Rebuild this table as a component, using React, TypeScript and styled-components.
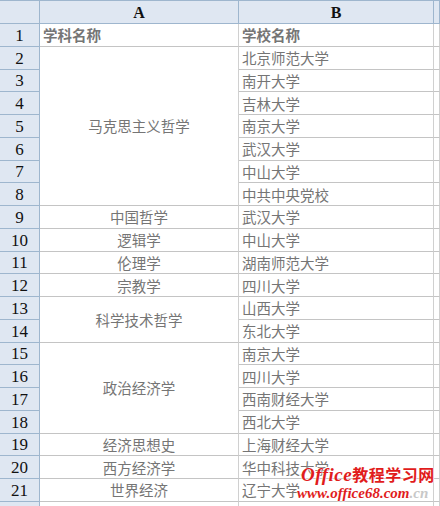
import React from "react";
import styled, { createGlobalStyle } from "styled-components";

const Global = createGlobalStyle`
  html, body { margin: 0; padding: 0; background: #ffffff; }
  body { overflow: hidden; }
`;

const ROW_H = 22.75;

const Wrap = styled.div`
  position: relative;
  width: 440px;
  height: 506px;
  overflow: hidden;
`;

const Sheet = styled.div`
  display: grid;
  grid-template-columns: 40px 199px 195px 1fr;
  grid-template-rows: 23px repeat(22, ${ROW_H}px);
  border-top: 1px solid #9eb6ce;
  box-sizing: border-box;
`;

const HeaderBase = styled.div`
  background: #dfe7f2;
  border-right: 1px solid #9eb6ce;
  border-bottom: 1px solid #9eb6ce;
  display: flex;
  align-items: center;
  justify-content: center;
  font-family: "Liberation Serif", "DejaVu Serif", serif;
  color: #111;
  box-sizing: border-box;
`;

const Corner = styled(HeaderBase)`
  grid-row: 1;
  grid-column: 1;
`;

const ColHeader = styled(HeaderBase)<{ $col: number }>`
  grid-row: 1;
  grid-column: ${(p) => p.$col};
  font-size: 16px;
  font-weight: bold;
  padding-top: 1px;
`;

const RowHeader = styled(HeaderBase)<{ $row: number }>`
  grid-row: ${(p) => p.$row};
  grid-column: 1;
  font-size: 17px;
  padding-top: 2px;
`;

const Cell = styled.div<{ $row: number; $col: number; $span?: number; $center?: boolean; $bold?: boolean }>`
  grid-row: ${(p) => p.$row} / span ${(p) => p.$span ?? 1};
  grid-column: ${(p) => p.$col};
  border-right: 1px solid #d0d0d0;
  border-bottom: 1px solid #c4c4c4;
  display: flex;
  align-items: center;
  justify-content: ${(p) => (p.$center ? "center" : "flex-start")};
  padding-left: ${(p) => (p.$center ? "0" : "3px")};
  font-family: "Noto Sans CJK SC", "Noto Sans", sans-serif;
  font-size: 14.5px;
  font-weight: ${(p) => (p.$bold ? "bold" : "normal")};
  color: #757575;
  white-space: nowrap;
  box-sizing: border-box;
  overflow: hidden;
`;

const Watermark = styled.div`
  position: absolute;
  left: 301px;
  top: 465px;
  display: flex;
  flex-direction: column;
  line-height: 1;
  text-shadow: 0 0 2px #fff, 0 0 2px #fff;
`;

const MarkTitle = styled.div`
  font-family: "Noto Sans CJK SC", sans-serif;
  font-weight: bold;
  font-size: 16px;
  color: #e11c1c;
  letter-spacing: 0.5px;
  & > i {
    font-family: "Liberation Serif", serif;
    font-size: 19px;
    font-weight: bold;
  }
`;

const MarkUrl = styled.div`
  font-family: "Liberation Serif", serif;
  font-style: italic;
  font-weight: bold;
  font-size: 15px;
  color: #e11c1c;
  margin-top: 2px;
  margin-left: -4px;
  & > span {
    color: #c8c8c8;
  }
`;

const colA: { row: number; span: number; text: string }[] = [
  { row: 2, span: 7, text: "马克思主义哲学" },
  { row: 9, span: 1, text: "中国哲学" },
  { row: 10, span: 1, text: "逻辑学" },
  { row: 11, span: 1, text: "伦理学" },
  { row: 12, span: 1, text: "宗教学" },
  { row: 13, span: 2, text: "科学技术哲学" },
  { row: 15, span: 4, text: "政治经济学" },
  { row: 19, span: 1, text: "经济思想史" },
  { row: 20, span: 1, text: "西方经济学" },
  { row: 21, span: 1, text: "世界经济" },
];

const colB = [
  "北京师范大学",
  "南开大学",
  "吉林大学",
  "南京大学",
  "武汉大学",
  "中山大学",
  "中共中央党校",
  "武汉大学",
  "中山大学",
  "湖南师范大学",
  "四川大学",
  "山西大学",
  "东北大学",
  "南京大学",
  "四川大学",
  "西南财经大学",
  "西北大学",
  "上海财经大学",
  "华中科技大学",
  "辽宁大学",
];

export default function App() {
  const rows = Array.from({ length: 22 }, (_, i) => i + 1);
  return (
    <>
      <Global />
      <Wrap>
        <Sheet>
          <Corner />
          <ColHeader $col={2}>A</ColHeader>
          <ColHeader $col={3}>B</ColHeader>
          <ColHeader $col={4} />
          {rows.map((r) => (
            <RowHeader key={r} $row={r + 1}>
              {r <= 21 ? r : ""}
            </RowHeader>
          ))}
          <Cell $row={2} $col={2} $bold>
            学科名称
          </Cell>
          <Cell $row={2} $col={3} $bold>
            学校名称
          </Cell>
          {colA.map((c) => (
            <Cell key={c.row} $row={c.row + 1} $span={c.span} $col={2} $center>
              {c.text}
            </Cell>
          ))}
          {colB.map((t, i) => (
            <Cell key={i} $row={i + 3} $col={3}>
              {t}
            </Cell>
          ))}
          {rows.map((r) => (
            <Cell key={"c" + r} $row={r + 1} $col={4} />
          ))}
          <Cell $row={23} $col={2} />
          <Cell $row={23} $col={3} />
        </Sheet>
        <Watermark>
          <MarkTitle>
            <i>Office</i>教程学习网
          </MarkTitle>
          <MarkUrl>
            www.office68.com<span>.cn</span>
          </MarkUrl>
        </Watermark>
      </Wrap>
    </>
  );
}
